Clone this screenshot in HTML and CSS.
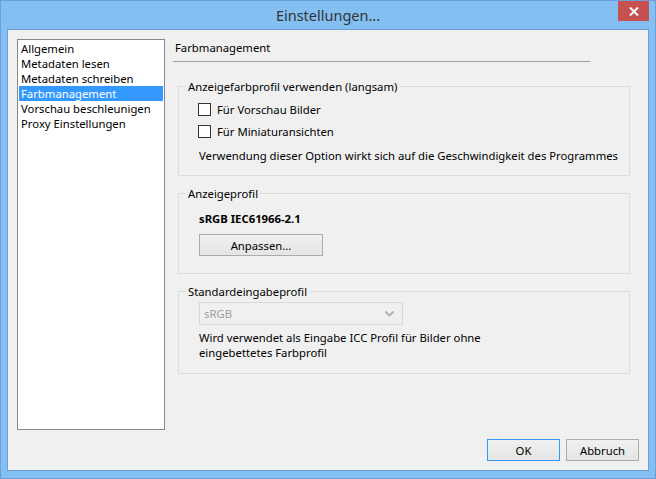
FILE: index.html
```html
<!DOCTYPE html>
<html lang="de">
<head>
    <meta charset="UTF-8">
    <title>Einstellungen...</title>
    <link rel="stylesheet" href="styles.css">
</head>
<body>
    <div class="window">
        <div class="window__titlebar">
            <div class="window__title">Einstellungen...</div>
            <div class="window__close">
                <svg width="10" height="9" viewBox="0 0 10 9"><path d="M1 0.5 L9 8.5 M9 0.5 L1 8.5" stroke="#fff" stroke-width="2"/></svg>
            </div>
        </div>
        <div class="window__client">
            <div class="settings">
                <ul class="settings__list">
                    <li class="settings__item">Allgemein</li>
                    <li class="settings__item">Metadaten lesen</li>
                    <li class="settings__item">Metadaten schreiben</li>
                    <li class="settings__item settings__item_active">Farbmanagement</li>
                    <li class="settings__item">Vorschau beschleunigen</li>
                    <li class="settings__item">Proxy Einstellungen</li>
                </ul>
                <div class="settings__panel">
                    <div class="settings__heading">Farbmanagement</div>
                    <div class="settings__divider"></div>

                    <fieldset class="group group_first">
                        <legend class="group__title">Anzeigefarbprofil verwenden (langsam)</legend>
                        <label class="check"><span class="check__box"></span>Für Vorschau Bilder</label>
                        <label class="check"><span class="check__box"></span>Für Miniaturansichten</label>
                        <div class="group__note">Verwendung dieser Option wirkt sich auf die Geschwindigkeit des Programmes</div>
                    </fieldset>

                    <fieldset class="group group_second">
                        <legend class="group__title">Anzeigeprofil</legend>
                        <div class="group__profile">sRGB IEC61966-2.1</div>
                        <button class="btn btn_wide">Anpassen...</button>
                    </fieldset>

                    <fieldset class="group group_third">
                        <legend class="group__title">Standardeingabeprofil</legend>
                        <div class="combo">
                            <span class="combo__value">sRGB</span>
                            <svg class="combo__arrow" width="9" height="6" viewBox="0 0 9 6"><path d="M0.5 0.5 L4.5 4.5 L8.5 0.5" fill="none" stroke="#a6a6a6" stroke-width="1.6"/></svg>
                        </div>
                        <div class="group__text">Wird verwendet als Eingabe ICC Profil für Bilder ohne<br>eingebettetes Farbprofil</div>
                    </fieldset>
                </div>
            </div>
            <div class="footer">
                <button class="btn btn_default">OK</button>
                <button class="btn">Abbruch</button>
            </div>
        </div>
    </div>
</body>
</html>
```

FILE: styles.css
```css
*{box-sizing:border-box}
body{margin:0;font-family:"Noto Sans","Open Sans",sans-serif;font-size:11.3px;color:#000}

.window{width:656px;height:479px;background:#84bff2;border:1px solid #6d9ed6;display:flex;flex-direction:column}
.window__titlebar{position:relative;height:29px;display:flex;align-items:center;justify-content:center}
.window__title{font-size:14.5px;color:#333}
.window__close{position:absolute;top:0;right:6px;width:31px;height:20px;background:#c75050;display:flex;align-items:center;justify-content:center}

.window__client{flex:1;margin:0 6px 7px 6px;background:#f0f0f0;border:1px solid #6d9ed6;padding:9px;display:flex;flex-direction:column}

.settings{display:flex;height:391px}
.settings__list{list-style:none;margin:0;padding:1px;width:148px;height:391px;background:#fff;border:1px solid #828790}
.settings__item{height:15px;line-height:15px;padding-left:2px;white-space:nowrap}
.settings__item_active{background:#3399ff;color:#fff}

.settings__panel{margin-left:8px;width:458px}
.settings__heading{padding-left:2px;line-height:15px;margin-top:1px}
.settings__divider{width:417px;height:1px;background:#a0a0a0;margin-top:6px}

.group{margin:0 0 0 5px;padding:0 0 0 19px;width:452px;border:1px solid #dcdcdc;min-width:0}
.group__title{padding:0 2px;margin-left:-12px;line-height:15px}
.group_first{margin-top:17px;padding-top:4px;padding-bottom:12px}
.group_second{margin-top:10px;padding-top:5px;padding-bottom:17px}
.group_third{margin-top:10px;padding-top:0;padding-bottom:13px}

.check{display:flex;align-items:center;height:22px}
.check__box{width:13px;height:13px;border:1px solid #333;background:#fff;margin-right:6px}
.group__note{margin-top:6px;line-height:15px;padding-left:1px;white-space:nowrap}

.group__profile{font-weight:700;line-height:15px;margin-top:5px;padding-left:1px}
.btn{font-family:inherit;font-size:11.3px;color:#000;width:73px;height:22px;background:linear-gradient(#f0f0f0,#e5e5e5);border:1px solid #acacac;padding:0}
.btn_wide{width:124px;margin-top:8px;margin-left:1px}
.btn_default{border-color:#3399ff}

.combo{width:204px;height:23px;border:1px solid #d9d9d9;margin-left:1px;margin-top:3px;display:flex;align-items:center;justify-content:space-between;padding:0 8px 0 4px}
.combo__value{color:#a0a0a0}
.group__text{margin-top:5px;line-height:15px;padding-left:1px}

.footer{display:flex;justify-content:flex-end;gap:6px;margin-top:9px}
```
